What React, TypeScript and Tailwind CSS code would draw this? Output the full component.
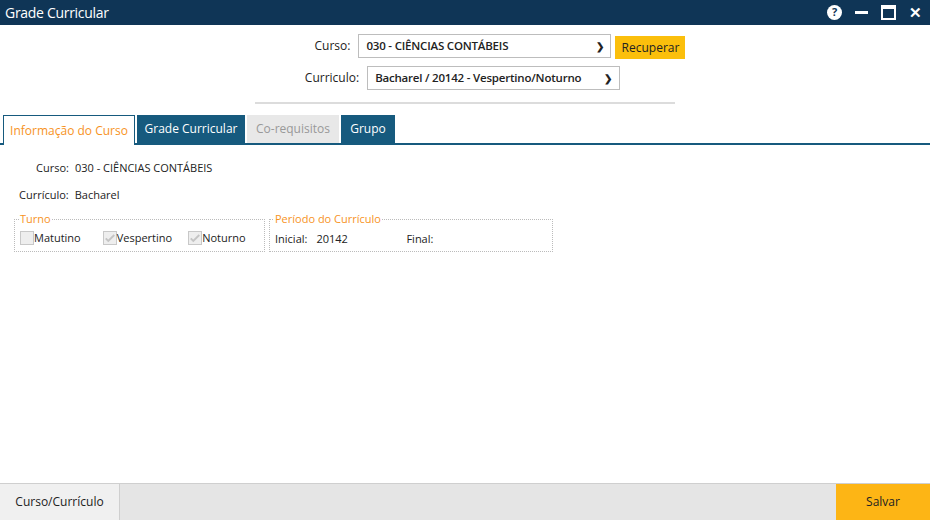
import React from "react";

const Check = ({ checked }: { checked: boolean }) => (
  <span className="inline-flex w-[14px] h-[14px] border border-[#c8c8c8] bg-[#eeeeee] items-center justify-center">
    {checked && (
      <svg viewBox="0 0 14 14" className="w-[12px] h-[12px]">
        <path d="M2 7.5l3 3 7-7" stroke="#c4c4c4" strokeWidth="2.2" fill="none" />
      </svg>
    )}
  </span>
);

export default function App() {
  return (
    <div className="w-[930px] h-[520px] flex flex-col bg-white text-[12px] text-[#222]" style={{ fontFamily: "'Open Sans', 'Noto Sans', sans-serif" }}>
      {/* title bar */}
      <div className="h-[25px] bg-[#0f3556] flex items-center justify-between pl-[5px] pr-[8px] text-white">
        <span className="text-[14px] tracking-[-0.3px]">Grade Curricular</span>
        <div className="flex items-center gap-[13px]">
          <span className="w-[15px] h-[15px] rounded-full bg-white text-[#0f3556] text-[11px] font-bold flex items-center justify-center">?</span>
          <span className="w-[13px] h-[3px] bg-white" />
          <span className="w-[15px] h-[15px] border-2 border-white border-t-[4px]" />
          <span className="text-[15px] font-bold leading-none">✕</span>
        </div>
      </div>

      {/* selectors */}
      <div className="flex flex-col items-center pt-[8px]">
        <div className="flex items-center ml-[70px]">
          <span className="mr-[8px] text-[12px]">Curso:</span>
          <div className="w-[253px] h-[24px] border border-[#bdbdbd] flex items-center justify-between px-[7px] font-semibold text-[11.5px] tracking-[-0.2px]">
            030 - CIÊNCIAS CONTÁBEIS <span className="text-[10px]">❯</span>
          </div>
          <button className="ml-[4px] w-[70px] h-[23px] bg-[#fbbf0c] text-[12px] mt-[3px]">Recuperar</button>
        </div>
        <div className="flex items-center mt-[7px] -ml-[5px]">
          <span className="mr-[8px] text-[12px]">Curriculo:</span>
          <div className="w-[253px] h-[24px] border border-[#bdbdbd] flex items-center justify-between px-[7px] font-semibold text-[11.5px] tracking-[-0.2px]">
            Bacharel / 20142 - Vespertino/Noturno <span className="text-[10px]">❯</span>
          </div>
        </div>
        <div className="w-[420px] h-[2px] bg-[#dcdcdc] mt-[12px]" />
      </div>

      {/* tabs */}
      <div className="flex items-end gap-[2px] pl-[3px] mt-[11px] border-b-2 border-[#165a7e] h-[30px]">
        <div className="w-[132px] h-[29px] border border-b-0 border-[#165a7e] bg-white text-[#f7931e] flex items-center justify-center -mb-[2px] h-[30px]">Informação do Curso</div>
        <div className="w-[108px] h-[28px] bg-[#165a7e] text-white flex items-center justify-center">Grade Curricular</div>
        <div className="w-[92px] h-[28px] bg-[#e8e8e8] text-[#999] flex items-center justify-center">Co-requisitos</div>
        <div className="w-[54px] h-[28px] bg-[#165a7e] text-white flex items-center justify-center">Grupo</div>
      </div>

      {/* content */}
      <div className="pl-[14px] pt-[15px] text-[11px]">
        <div className="flex pl-[22px]"><span className="mr-[6px]">Curso:</span>030 - CIÊNCIAS CONTÁBEIS</div>
        <div className="flex pl-[5px] mt-[10px]"><span className="mr-[6px]">Currículo:</span>Bacharel</div>
        <div className="flex gap-[4px] mt-[8px]">
          <fieldset className="w-[251px] h-[41px] border border-dotted border-[#bbb] px-[5px]">
            <legend className="text-[#f7931e] px-[1px] -ml-[1px]">Turno</legend>
            <div className="flex items-center mt-[2px]">
              <Check checked={false} /><span className="mr-[22px]">Matutino</span>
              <Check checked /><span className="mr-[16px]">Vespertino</span>
              <Check checked /><span>Noturno</span>
            </div>
          </fieldset>
          <fieldset className="w-[284px] h-[41px] border border-dotted border-[#bbb] px-[5px]">
            <legend className="text-[#f7931e] px-[1px] -ml-[1px]">Período do Currículo</legend>
            <div className="flex items-center mt-[3px]">
              <span className="mr-[9px]">Inicial:</span><span className="w-[90px]">20142</span><span>Final:</span>
            </div>
          </fieldset>
        </div>
      </div>

      <div className="flex-1" />
      {/* footer */}
      <div className="h-[37px] flex border-t border-[#cfcfcf] bg-[#e5e5e5] text-[12px]">
        <div className="w-[120px] bg-[#f0f0f0] border-r border-[#cfcfcf] flex items-center justify-center">Curso/Currículo</div>
        <div className="flex-1" />
        <div className="w-[94px] bg-[#fdb515] flex items-center justify-center">Salvar</div>
      </div>
    </div>
  );
}
